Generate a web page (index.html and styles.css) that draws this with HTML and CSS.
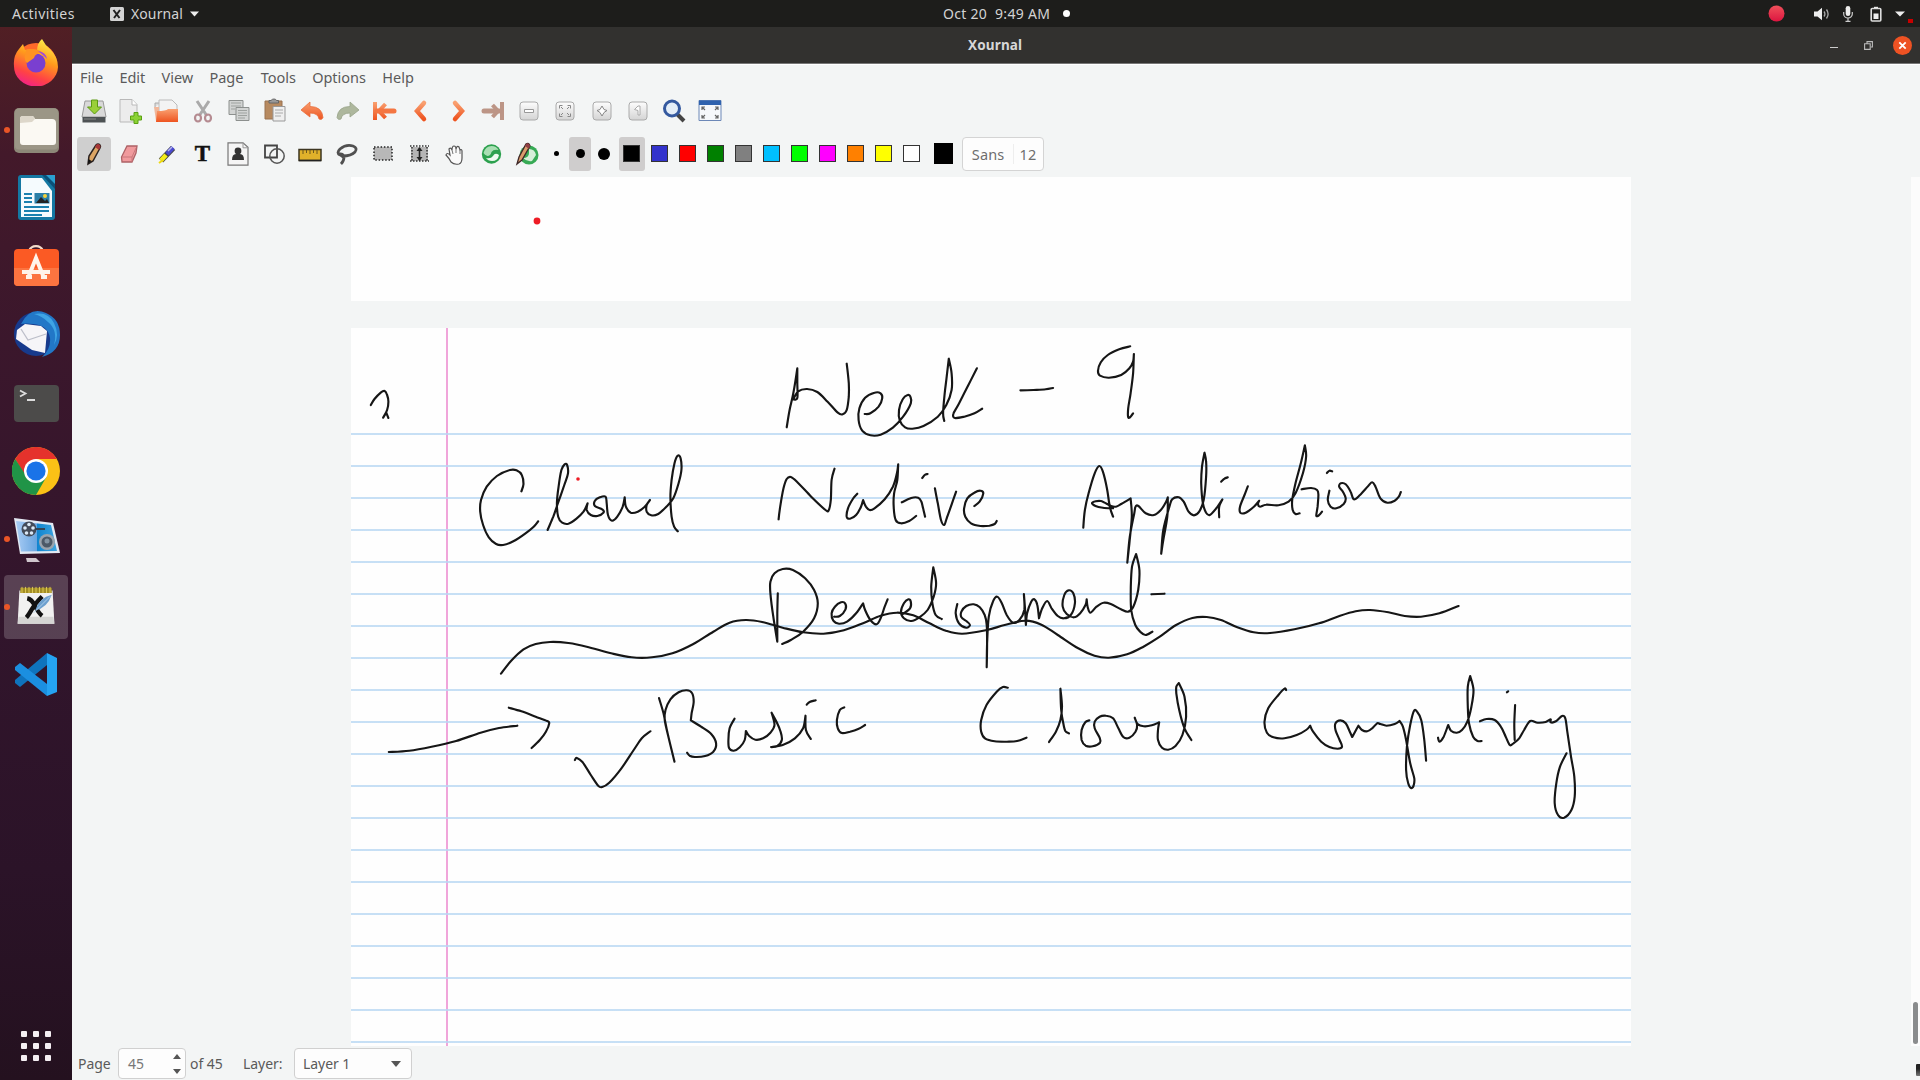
FILE: index.html
```html
<!DOCTYPE html>
<html lang="en">
<head>
<meta charset="utf-8">
<title>Xournal</title>
<link rel="stylesheet" href="styles.css">
</head>
<body>
<svg width="0" height="0" class="defs">
  <defs>
    <linearGradient id="or" x1="0" y1="0" x2="0" y2="1"><stop offset="0" stop-color="#f9a070"/><stop offset="1" stop-color="#ee5420"/></linearGradient>
    <linearGradient id="fx" x1=".7" y1="0" x2=".3" y2="1"><stop offset="0" stop-color="#fff04a"/><stop offset=".4" stop-color="#ff9a1c"/><stop offset=".75" stop-color="#ff4344"/><stop offset="1" stop-color="#f0208a"/></linearGradient>
    <linearGradient id="gr" x1="0" y1="0" x2="0" y2="1"><stop offset="0" stop-color="#fdfdfd"/><stop offset="1" stop-color="#d4d4d4"/></linearGradient>
    <linearGradient id="rk" x1="0" y1="0" x2="1" y2="0"><stop offset="0" stop-color="#a8ccf4"/><stop offset=".5" stop-color="#6aa5e0"/><stop offset=".52" stop-color="#1185cf"/><stop offset="1" stop-color="#3fa5e0"/></linearGradient>
    <linearGradient id="rec" x1="0" y1="0" x2="0" y2="1"><stop offset="0" stop-color="#f0505a"/><stop offset="1" stop-color="#dc1540"/></linearGradient>
  </defs>
</svg>

<header class="topbar">
  <span class="activities">Activities</span>
  <span class="appmenu">
    <svg width="14" height="14" viewBox="0 0 14 14"><rect width="14" height="14" rx="1.500" fill="#d4d4d4"/><path d="M3.500 3l6 8M10 3L4 11" stroke="#222" stroke-width="2"/></svg>
    <span>Xournal</span>
    <svg width="9" height="6" viewBox="0 0 9 6"><path d="M0 .5h9L4.500 5.500z" fill="#eee"/></svg>
  </span>
  <span class="clock">Oct 20&nbsp; 9:49 AM</span><i class="clockdot"></i>
  <span class="tray">
    <svg class="rec" width="17" height="17" viewBox="0 0 17 17"><circle cx="8.500" cy="8.500" r="8" fill="url(#rec)"/></svg>
    <svg class="vol" width="16" height="14" viewBox="0 0 16 14"><path d="M0 4.500h3.500L8 .8v12.400L3.500 9.500H0z" fill="#eee"/><path d="M10 4.500q1.800 2.500 0 5M12.500 2.500q3.200 4.500 0 9" fill="none" stroke="#aaa" stroke-width="1.300"/></svg>
    <svg class="mic" width="10" height="16" viewBox="0 0 10 16"><rect x="2.700" y="0" width="4.600" height="10" rx="2.300" fill="#eee"/><path d="M.7 6v2a4.300 4 0 0 0 8.600 0V6M5 12v3.500M2.500 15.400h5" fill="none" stroke="#ccc" stroke-width="1.200"/></svg>
    <svg class="bat" width="12" height="16" viewBox="0 0 12 16"><path d="M4 .8h4v2H4z" fill="#eee"/><rect x="1.200" y="2.500" width="9.600" height="12.500" rx="1" fill="none" stroke="#ddd" stroke-width="1.600"/><path d="M3.500 7.500h5V13h-5z" fill="#eee"/></svg>
    <svg width="10" height="6" viewBox="0 0 10 6"><path d="M0 .5h10L5 5.500z" fill="#eee"/></svg>
  </span>
  <i class="marker"></i>
</header>

<div class="desktop">
<nav class="dock">
  <div class="app"><svg width="48" height="48" viewBox="0 0 48 48"><circle cx="24" cy="26" r="21" fill="#ff6a2a"/><path d="M30 1q3 6 8 10 8 8 8 18a22 20 0 0 1-44-1q-1-10 5-17l4-5 2 6q7-2 12 1 0-8 5-12z" fill="url(#fx)"/><circle cx="24" cy="25" r="9.500" fill="#7a3fd0"/><path d="M14 12q10-3 17 3-8 0-9 5l-7 5q-4-3-1-13z" fill="#ff9322"/><path d="M26 13q8 1 9 8l-3-3" fill="#a24bd8"/></svg></div>
  <div class="app run"><svg width="48" height="48" viewBox="0 0 48 48"><rect x="2" y="2" width="45" height="45" rx="5" fill="#8d8878"/><rect x="3" y="2.500" width="43" height="41" rx="4" fill="#9b9686"/><path d="M8 13q0-3 3-3h9q2 0 3 3h17q4 0 4 4v19q0 3-3 3H11q-3 0-3-3z" fill="#fbf9f3"/><path d="M8 17v-4q0-3 3-3h9q2 0 3 3l-3 3z" fill="#ddd7ca"/></svg></div>
  <div class="app"><svg width="48" height="48" viewBox="0 0 48 48"><path d="M9 1h29l5 8v34q0 3-3 3H9q-3 0-3-3V4q0-3 3-3z" fill="#1478a3"/><path d="M9 4h21l10 13v26H9z" fill="#f5fbfe"/><path d="M30 1h13v14z" fill="#0b5078"/><path d="M34 1h9v9z" fill="#2a9fd0"/><path d="M12 20h8M12 24h8M12 28h8M12 33h25M12 37h25M12 41h18" stroke="#1a81b0" stroke-width="1.900"/><rect x="22.500" y="19" width="15" height="10.500" fill="#2a7fa8"/><path d="M24 29l5-6 4 4 2-2 2 4z" fill="#222"/><circle cx="33" cy="22" r="2" fill="#f4d03a"/></svg></div>
  <div class="app"><svg width="48" height="48" viewBox="0 0 48 48"><path d="M17 9a7.500 7.500 0 0 1 14 0" fill="none" stroke="#f3dccb" stroke-width="2.200"/><rect x="2" y="7" width="45" height="37" rx="4" fill="#fb5a24"/><path d="M2 26h45v14q0 4-4 4H6q-4 0-4-4z" fill="#fc7440"/><path d="M16 36l8-20 8 20M10 30h28" fill="none" stroke="#fff4ea" stroke-width="4"/><path d="M14 35h6M29 35h6" stroke="#fff4ea" stroke-width="4"/></svg></div>
  <div class="app"><svg width="48" height="48" viewBox="0 0 48 48"><circle cx="24" cy="24" r="22" fill="#173a8c"/><path d="M9 14Q18-4 34 3q14 6 14 22 0 17-18 22 9-8 8-19-2-13-17-14-7-1-12 0z" fill="#2277c7"/><path d="M22 4q14-3 20 9t0 22q4-15-6-23-6-6-14-8z" fill="#3fa4e4"/><path d="M5 20l8-6 16 2 6 5-2 22-13-3-16-11z" fill="#f6f5f8"/><path d="M9 19l7 11 18-6" fill="none" stroke="#bdbfca" stroke-width="1.300"/></svg></div>
  <div class="app"><svg width="48" height="48" viewBox="0 0 48 48"><rect x="2" y="6" width="45" height="37" rx="4" fill="#4c4b4a"/><path d="M8 11.500l5.500 3-5.500 3M15 21h8" fill="none" stroke="#dcdcdc" stroke-width="1.800"/></svg></div>
  <div class="app"><svg width="48" height="48" viewBox="0 0 48 48"><circle cx="24" cy="24" r="24" fill="#fbc116"/><path d="M3.200 12a24 24 0 0 1 41.600 0H24L14 30z" fill="#e5322c"/><path d="M3.200 12A24 24 0 0 0 24 48l10.400-18L24 34l-9-4z" fill="#209447"/><circle cx="24" cy="24" r="12" fill="#fff"/><circle cx="24" cy="24" r="9.600" fill="#1a73e8"/></svg></div>
  <div class="app run"><svg width="48" height="48" viewBox="0 0 48 48"><path d="M2 3l39 5 7 30-40 1z" fill="#e3e9f3"/><path d="M4 6l35 4 6 26-36 .5z" fill="url(#rk)"/><circle cx="17" cy="14" r="7.500" fill="#444b59"/><g fill="#dbe8f5"><circle cx="17" cy="9.500" r="1.800"/><circle cx="13" cy="13" r="1.800"/><circle cx="21" cy="13" r="1.800"/><circle cx="14.500" cy="18" r="1.800"/><circle cx="19.500" cy="18" r="1.800"/></g><path d="M23 14h10" stroke="#345" stroke-width="2"/><circle cx="35" cy="27" r="8" fill="#9aa4ae"/><circle cx="35" cy="27" r="5.500" fill="#4c5967"/><circle cx="35" cy="26" r="2.500" fill="#8394a3"/><path d="M14 43h10l4 4H15z" fill="#cfc5cc"/></svg></div>
  <div class="app run active"><svg width="48" height="48" viewBox="0 0 48 48"><path d="M5 5h38l2 38H3z" fill="#f1f1f0"/><path d="M3 43l1-8h40l1 8z" fill="#d5d5d3"/><path d="M6 2h36v6H6z" fill="#a28d25"/><path d="M8 1v7M12 1v7M16 1v7M20 1v7M24 1v7M28 1v7M32 1v7M36 1v7M40 1v7" stroke="#e3cf59"/><path d="M14 14q5 1 9 9t8 11M31 12q-8 8-12 15t-6 9" fill="none" stroke="#111" stroke-width="5"/><path d="M42 10q-14 3-19 18 14-3 19-18z" fill="#6da0ce"/><path d="M40 12L21 31" stroke="#b7d4ea"/></svg></div>
  <div class="app"><svg width="48" height="48" viewBox="0 0 48 48"><path d="M35 2l10 5v34l-10 4z" fill="#25a3f2"/><path d="M35 2v12L8 36l-5-4v-3z" fill="#0f73bd"/><path d="M3 16l5-4 27 21v12L3 19z" fill="#1b8fe0"/></svg></div>
  <div class="grid"><i></i><i></i><i></i><i></i><i></i><i></i><i></i><i></i><i></i></div>
</nav>

<main class="window">
  <div class="titlebar">
    <span class="title">Xournal</span>
    <span class="controls">
      <i class="min"></i>
      <svg width="9" height="9" viewBox="0 0 9 9"><path d="M3 2.500V.6h5.400V6H7M.6 2.800h5.600v5.600H.6z" fill="none" stroke="#bbb" stroke-width="1.100"/></svg>
      <svg width="19" height="19" viewBox="0 0 19 19"><circle cx="9.500" cy="9.500" r="9.500" fill="#ee5223"/><path d="M6.300 6.300l6.400 6.400M12.700 6.300l-6.400 6.400" stroke="#fff" stroke-width="1.800"/></svg>
    </span>
  </div>
  <div class="menubar"><span>File</span><span>Edit</span><span>View</span><span>Page</span><span>Tools</span><span>Options</span><span>Help</span></div>

  <div class="toolbar main-tools">
    <b><svg viewBox="0 0 24 24"><path d="M3 2h18l3 16H0z" fill="#d9d9d9" stroke="#999"/><path d="M.5 18h23v5.500H.5z" fill="#4d5254"/><path d="M2 20h12" stroke="#888"/><path d="M9.500 1h6v7h4l-7 7-7-7h4z" fill="#9ad038" stroke="#5c9a12"/></svg></b>
    <b><svg viewBox="0 0 24 24"><path d="M2 .5h12l5 5V23H2z" fill="#ececec" stroke="#b9b9b9"/><path d="M14 .5V6h5" fill="#fff" stroke="#b9b9b9"/><path d="M16 13.500h4V17h3.500v4H20v3.500h-4V21h-3.500v-4H16z" fill="#8bd234" stroke="#5aa113"/></svg></b>
    <b><svg viewBox="0 0 24 24"><path d="M0 8V4h6" fill="#ddd" stroke="#aaa"/><path d="M4 1h13l5 5v8H4z" fill="#f3f3f3" stroke="#bbb"/><path d="M-1 8h5v14H1z" fill="#f1b79a"/><path d="M2 12q9 0 11-2h10v13H1z" fill="url(#or)"/></svg></b>
    <b><svg viewBox="0 0 24 24"><path d="M6 2l10 15M18 2L8 17" stroke="#aaa" stroke-width="3"/><ellipse cx="7" cy="19" rx="3" ry="3.500" fill="none" stroke="#b58b91" stroke-width="2.200"/><ellipse cx="17" cy="19" rx="3" ry="3.500" fill="none" stroke="#b58b91" stroke-width="2.200"/></svg></b>
    <b><svg viewBox="0 0 24 24"><g fill="#d2d4d3" stroke="#8c908e"><path d="M2 1.500h14v14H2z"/><path d="M9 8.500h13v13H9z"/></g><path d="M4 4h10M4 7h10M4 10h4M11 11.500h9M11 14h9M11 16.500h9M11 19h7" stroke="#9ea29f"/></svg></b>
    <b><svg viewBox="0 0 24 24"><path d="M2 2h17v18H2z" fill="#b78a60" stroke="#9a7350"/><path d="M6 4V1.500h2Q9 0 11 0t2.500 1.500h2V4z" fill="#999" stroke="#666"/><path d="M10 7.500h12V22H10z" fill="#efefef" stroke="#999"/><path d="M12 11h8M12 14h8M12 17h6" stroke="#aaa"/></svg></b>
    <b><svg viewBox="0 0 24 24"><path d="M1 11l9-8v4.500q12 0 13 11-1 3-4 1.500-1-6-9-6v4z" fill="url(#or)" stroke="#e8703d" stroke-width=".8"/></svg></b>
    <b><svg viewBox="0 0 24 24"><path d="M23 11l-9-8v4.500q-12 0-13 11 1 3 4 1.500 1-6 9-6v4z" fill="#adb79d" stroke="#98a389" stroke-width=".8"/></svg></b>
    <b><svg viewBox="0 0 24 24"><path d="M3 3v18M13.500 5L7 12l6.500 7" fill="none" stroke="url(#or)" stroke-width="4"/><path d="M22 12H5" stroke="#f47642" stroke-width="5" stroke-linecap="round"/></svg></b>
    <b><svg viewBox="0 0 24 24"><path d="M16 4L9 12l7 8" fill="none" stroke="url(#or)" stroke-width="4.500" stroke-linecap="round"/></svg></b>
    <b><svg viewBox="0 0 24 24"><path d="M10 4l7 8-7 8" fill="none" stroke="url(#or)" stroke-width="4.500" stroke-linecap="round"/></svg></b>
    <b><svg viewBox="0 0 24 24"><path d="M21 3v18M11.500 6l5.500 6-5.500 6" fill="none" stroke="#bc9586" stroke-width="4"/><path d="M3 12h15" stroke="#bc9586" stroke-width="5" stroke-linecap="round"/></svg></b>
    <b><svg viewBox="0 0 24 24"><rect x="3" y="3" width="18" height="18" rx="3" fill="url(#gr)" stroke="#aaa"/><path d="M7.500 10.500h9v3h-9z" fill="#fff" stroke="#999"/></svg></b>
    <b><svg viewBox="0 0 24 24"><rect x="3" y="3" width="18" height="18" rx="3" fill="url(#gr)" stroke="#aaa"/><path d="M6.500 9.500v-3h3M14.500 6.500h3v3M17.500 14.500v3h-3M9.500 17.500h-3v-3M8 8l2 2M16 8l-2 2M8 16l2-2M16 16l-2-2" fill="none" stroke="#888"/></svg></b>
    <b><svg viewBox="0 0 24 24"><rect x="3" y="3" width="18" height="18" rx="3" fill="url(#gr)" stroke="#aaa"/><path d="M12 7l2 3.500 3 1-3 2L12 17l-2-3.500-3-2 3-1z" fill="#fff" stroke="#888"/></svg></b>
    <b><svg viewBox="0 0 24 24"><rect x="3" y="3" width="18" height="18" rx="3" fill="url(#gr)" stroke="#aaa"/><path d="M8.500 10.500L12 7h2v9h-2v-4.500z" fill="#fff" stroke="#aaa"/></svg></b>
    <b><svg viewBox="0 0 24 24"><path d="M15 15l7 7" stroke="#444" stroke-width="4"/><circle cx="10" cy="9.500" r="7.500" fill="#e4eef8" stroke="#34599f" stroke-width="3"/></svg></b>
    <b><svg viewBox="0 0 24 24"><path d="M1 1.500h22v20H1z" fill="#f6f8fb" stroke="#6c88b7"/><path d="M1 1.500h22V6H1z" fill="#2f62ae"/><path d="M4 11V8h3M17 8h3v3M20 16v3h-3M7 19H4v-3M4 8l3 3M20 8l-3 3M4 19l3-3M20 19l-3-3" fill="none" stroke="#666" stroke-width="1.200"/></svg></b>
  </div>

  <div class="toolbar pen-tools">
    <b class="on"><svg viewBox="0 0 24 24"><path d="M6 22l1-8L14 3q2-2 4 0 1 1 0 3l-7 13z" fill="#dca564" stroke="#2b2220" stroke-width="1.500"/><path d="M14 3q2-2 4 0 1 1 0 3l-1 2-4-3z" fill="#a83838"/><path d="M6 22l.5-5 3 2z" fill="#111"/></svg></b>
    <b><svg viewBox="0 0 24 24"><path d="M9 4h10l-1 7-4 9H4l-.5-5z" fill="#f09a9d" stroke="#ad6266" stroke-width="1.300"/><path d="M4 15h10l4-9M14 15v5" fill="none" stroke="#c9777b"/></svg></b>
    <b><svg viewBox="0 0 24 24"><path d="M7 18.500L19 6" stroke="#444" stroke-width="6"/><path d="M13 12l6-6.500" stroke="#4a4ad0" stroke-width="4.500"/><path d="M7 18.500l5-5.500" stroke="#f4ed18" stroke-width="4.500"/><path d="M5 21l4-3" stroke="#eed910" stroke-width="2"/><path d="M14 9l4-4" stroke="#b9b9ef" stroke-width="1.500"/></svg></b>
    <b class="text-tool">T</b>
    <b><svg viewBox="0 0 24 24"><path d="M2 .8h15l5 4.500v17.900H2z" fill="#f5f5f5" stroke="#777" stroke-width="1.200"/><path d="M17 .8v5h5" fill="none" stroke="#999"/><circle cx="12" cy="9" r="3.400" fill="#333"/><path d="M6 18q0-6 4-6h4q4 0 4 6z" fill="#333"/></svg></b>
    <b><svg viewBox="0 0 24 24"><path d="M2 3.500h12v12H2z" fill="none" stroke="#444" stroke-width="1.800"/><circle cx="14" cy="14" r="7.200" fill="none" stroke="#555" stroke-width="1.500"/></svg></b>
    <b><svg viewBox="0 0 24 24"><path d="M0 7.500h22v11H0z" fill="#e0b12a" stroke="#3d3622" stroke-width="1.500"/><path d="M4 8v4M7.500 8v3M11 8v4M14.500 8v3M18 8v4" stroke="#6d571a"/><path d="M0 18.500h22" stroke="#222" stroke-width="1.500"/></svg></b>
    <b><svg viewBox="0 0 24 24"><path d="M5 13q-4-2 0-6 6-5 13-3 5 2 2 6-4 4-12 4M4 12q4-1 5 3 0 4-3 7M4 12l4 3" fill="none" stroke="#505050" stroke-width="2.800"/></svg></b>
    <b><svg viewBox="0 0 24 24"><path d="M3 5h18v13H3z" fill="#b8b8b8" stroke="#222" stroke-width="1.500" stroke-dasharray="1.500 1.800"/></svg></b>
    <b><svg viewBox="0 0 24 24"><path d="M4 5h17v14H4z" fill="#b5b5b5"/><path d="M3 4h19M3 19h19M5 5v14M20 5v14" stroke="#333" stroke-width="1.500" stroke-dasharray="1.500 1.500"/><path d="M12.500 6v12" stroke="#222" stroke-width="1.600"/><path d="M9.500 9l3-4 3 4zM9.500 15l3 4 3-4z" fill="#222"/></svg></b>
    <b><svg viewBox="0 0 24 24"><path d="M8 20q-2-4-5-7 1-3 4 0l-1-6q2-2 3 1 0-4 2-4t2 3q1-4 3-2l1 3q2-1 2 1v7q0 5-3 6-5 1-8-2z" fill="#fafafa" stroke="#555" stroke-width="1.200"/><path d="M9 8l1 4M13 7v4M17 8v4" stroke="#777"/></svg></b>
    <b><svg viewBox="0 0 24 24"><circle cx="12.500" cy="12" r="9.700" fill="#2ca14e"/><path d="M4.500 11q2-7 8-7 5 0 7 4-5-1-7 2-1 4-4 4-3-1-4-3z" fill="#a9dfb3"/><path d="M20 13q-1 6-7 6-4 0-6-3 5 1 7-2 2-4 6-1z" fill="#eefaf0"/></svg></b>
    <b><svg viewBox="0 0 24 24"><circle cx="14" cy="13" r="9.500" fill="#37aa55"/><path d="M14 7q6 0 7 6l-4 6q-5 1-9-3 6 0 6-5z" fill="#d5efd9"/><path d="M2 22l2-7L11 2q3-2 4 2L7 18z" fill="#d99c6c" stroke="#3d2626" stroke-width="1.300"/><path d="M11 2q3-2 4 2l-1 3-4-3z" fill="#914044"/></svg></b>
    <span class="thick"><i class="t1"></i></span><span class="thick on"><i class="t2"></i></span><span class="thick"><i class="t3"></i></span>
    <span class="swatch on"><i class="black"></i></span><span class="swatch"><i class="blue"></i></span><span class="swatch"><i class="red"></i></span><span class="swatch"><i class="green"></i></span><span class="swatch"><i class="gray"></i></span><span class="swatch"><i class="sky"></i></span><span class="swatch"><i class="lime"></i></span><span class="swatch"><i class="magenta"></i></span><span class="swatch"><i class="orange"></i></span><span class="swatch"><i class="yellow"></i></span><span class="swatch"><i class="white"></i></span>
    <i class="current"></i>
    <span class="font"><span>Sans</span><span class="size">12</span></span>
  </div>

  <section class="canvas">
    <div class="sheet previous"></div>
    <div class="sheet ruled"><div class="rules"></div></div>
    <svg id="ink" class="ink" viewBox="72 177 1848 869" role="img" aria-label="Week - 9, Cloud Native Application Development, Basic Cloud Computing"></svg>
    <div class="track"><i class="scroll"></i></div>
  </section>

  <footer class="status">
    <span class="lbl-page">Page</span>
    <span class="spin"><span>45</span><svg width="8" height="20" viewBox="0 0 8 20"><path d="M0 5l4-5 4 5zM0 15h8l-4 5z" fill="#555"/></svg></span>
    <span class="of">of 45</span>
    <span class="lbl-layer">Layer:</span>
    <span class="combo"><span>Layer 1</span><svg width="10" height="6" viewBox="0 0 10 6"><path d="M0 0h10L5 6z" fill="#555"/></svg></span>
    <i class="grip"></i>
  </footer>
</main>
</div>
<script src="ink.js"></script>
</body>
</html>
```
FILE: styles.css
```css
* { box-sizing: border-box; }
body { margin: 0; width: 1920px; height: 1080px; overflow: hidden; display: flex; flex-direction: column; font: 14px "Noto Sans", "Open Sans", sans-serif; color: #5a5a5a; background: #f3f5f5; }
svg { display: block; flex: none; }
.defs { position: absolute; }

.topbar { height: 27px; flex: none; background: #1d1d1b; color: #d3d3d3; display: flex; align-items: center; position: relative; padding-left: 12px; line-height: 26px; }
.activities { width: 98px; letter-spacing: .45px; }
.appmenu { display: flex; align-items: center; gap: 7px; width: 833px; letter-spacing: .1px; }
.clock { width: 119px; white-space: nowrap; letter-spacing: .3px; }
.clockdot { width: 7px; height: 7px; border-radius: 50%; background: #fff; margin-left: 1px; }
.tray { margin-left: auto; display: flex; align-items: center; margin-right: 15px; }
.rec { margin-right: 29px; }
.vol { margin-right: 13px; }
.mic { margin-right: 17px; }
.bat { margin-right: 13px; }
.marker { position: absolute; right: 7px; top: 19px; width: 5px; height: 4px; background: #c80000; }

.desktop { flex: 1; display: flex; min-height: 0; }
.dock { width: 72px; flex: none; background: linear-gradient(#511f24, #43192a 12%, #3b172c 30%, #32152c 55%, #2b1328 80%, #24111f); padding-top: 1px; display: flex; flex-direction: column; }
.app { height: 68.100px; display: flex; align-items: center; justify-content: center; position: relative; }
.run::before { content: ""; position: absolute; left: 4px; top: 31px; width: 6px; height: 6px; border-radius: 50%; background: #ea5527; z-index: 1; }
.app.active::after { content: ""; position: absolute; inset: 2px 4px; border-radius: 4px; background: #ffffff30; }
.active svg { position: relative; z-index: 1; width: 42px; }
.grid { margin: auto auto 19px; display: grid; grid-template-columns: repeat(3, 6px); gap: 6px; }
.grid i { height: 6px; background: #f4eef2; border-radius: 1px; }

.window { flex: 1; display: flex; flex-direction: column; min-width: 0; }
.titlebar { height: 37px; background: #32312f; border-bottom: 1px solid #777; display: flex; align-items: center; padding: 0 8px 0 896px; flex: none; }
.title { color: #d7d7d7; font-weight: 700; font-size: 13.500px; letter-spacing: .15px; }
.controls { margin-left: auto; display: flex; align-items: center; }
.min { width: 8px; height: 1px; background: #ccc; margin: 5px 26px 0 0; }
.controls svg { margin-right: 20px; }
.controls svg:last-child { margin-right: 0; }
.menubar { height: 26px; flex: none; display: flex; gap: 16.200px; padding: 0 8px; line-height: 24px; font-size: 14.500px; border-top: 1px solid #fff; }
.menubar span:nth-child(5) { margin-left: 1px; }

.toolbar { display: flex; align-items: center; padding-left: 4px; flex: none; }
.main-tools { height: 41px; }
.pen-tools { height: 46px; padding-bottom: 1px; }
.toolbar b { width: 36.250px; height: 34px; display: flex; align-items: center; justify-content: center; }
.pen-tools b { width: 36.100px; }
.toolbar b svg { width: 24px; height: 24px; overflow: visible; }
b.on { background: #cfcfcf; background-clip: content-box; padding: 0 1px; border-radius: 4px; }
.toolbar .text-tool { font: 700 23px/34px "Liberation Serif", serif; color: #111; -webkit-text-stroke: .5px #111; }
.thick { width: 22px; height: 34px; margin-right: 2px; border-radius: 3px; display: flex; align-items: center; justify-content: center; }
.thick.on, .swatch.on { background: #cfcdcd; }
.thick i { border-radius: 50%; background: #000; }
.t1 { width: 5px; height: 5px; }
.t2 { width: 9px; height: 9px; }
.t3 { width: 12px; height: 12px; }
.swatch { width: 26px; height: 34px; margin-right: 2px; border-radius: 3px; display: flex; align-items: center; justify-content: center; }
.thick + .swatch { margin-left: 1.500px; }
.swatch i { width: 17px; height: 17px; border: 1.500px solid #333; }
.black { background: #000; }
.blue { background: #3333cc; }
.red { background: #f00; }
.green { background: #008000; }
.gray { background: #808080; }
.sky { background: #00c0ff; }
.lime { background: #0f0; }
.magenta { background: #f0f; }
.orange { background: #ff8000; }
.yellow { background: #ff0; }
.white { background: #fff; }
.current { width: 19px; height: 21px; background: #000; margin: 0 9px 0 7px; }
.font { width: 82px; height: 34px; border: 1px solid #d4d4d4; border-radius: 4px; background: #fdfdfd; display: flex; align-items: center; padding-left: 9px; font-size: 14.500px; color: #6e6e6e; letter-spacing: .2px; }
.size { margin-left: 8px; border-left: 1px solid #eee; padding-left: 6px; }

.canvas { height: 869px; flex: none; position: relative; padding-left: 279px; overflow: hidden; }
.sheet { width: 1280px; background: #fefefe; }
.previous { height: 124px; margin-bottom: 27px; }
.ruled { height: 718px; padding-top: 105px; background: linear-gradient(90deg, transparent 95px, #f0a5da 95px, #f0a5da 97px, transparent 97px), #fefefe; }
.rules { height: 613px; background: repeating-linear-gradient(#b9d8f3cc 0, #b9d8f3cc 2px, transparent 2px, transparent 32px); }
.ink { position: absolute; left: 0; top: 0; width: 1848px; height: 869px; }
.ink path { fill: none; stroke: #161616; stroke-width: 2.150; stroke-linecap: round; stroke-linejoin: round; }
.track { position: absolute; right: 0; top: 0; width: 9px; height: 869px; background: #fcfcfc; padding: 825px 0 0 2px; }
.scroll { display: block; width: 5px; height: 42px; border-radius: 3px; background: #8a8c8d; }

.status { height: 34px; flex: none; display: flex; align-items: center; padding: 1px 0 0 6px; letter-spacing: -.05px; }
.lbl-page { width: 40px; }
.spin { width: 68px; height: 31px; border: 1px solid #d0d0d0; border-radius: 4px; background: #fdfdfd; display: flex; align-items: center; justify-content: space-between; padding: 0 4px 0 9px; color: #777; }
.of { width: 57px; padding-left: 4px; white-space: nowrap; }
.lbl-layer { width: 51px; }
.combo { width: 118px; height: 31px; border: 1px solid #d0d0d0; border-radius: 4px; background: #fdfdfd; display: flex; align-items: center; justify-content: space-between; padding: 0 10px 0 8px; }
.grip { margin-left: auto; width: 4px; height: 12px; margin-top: 16px; margin-bottom: 4px; background: linear-gradient(#222 40%, #777); border-radius: 1px 0 0 1px; }
```
FILE: ink.js
```js
// Pen strokes, one per line. Each block is recorded on its own grid: origin x, origin y, then points.
const SX = 2.45, SY = 3;
const blocks = [
  [350, 330, `
51,225 60,207 76,187 85,183 91,195 94,215 91,240 81,263 81,263 89,248 89,248 94,264
1070,292 1077,240 1086,190 1096,115 1096,115 1096,160 1096,204 1086,208 1086,208 1098,184 1120,177 1145,186 1170,215 1195,248 1207,253 1217,240 1222,200 1222,160 1217,101
1261,252 1275,250 1295,230 1304,205 1300,190 1285,188 1262,203 1248,235 1246,270 1255,302 1275,316 1300,314 1330,293 1355,260 1374,220 1373,200 1366,195 1354,208 1345,240 1347,272 1360,292 1378,296 1405,288 1440,260 1461,225 1474,180 1474,130 1467,86 1467,86 1462,140 1457,190 1453,250 1456,273
1536,115 1515,165 1490,225 1478,252 1482,264 1505,260 1530,250 1549,236
420,484 425,462 421,435 408,421 392,420 360,438 335,470 321,510 319,545 326,585 340,622 358,642 375,645 400,634 430,610 450,590 461,574
484,600 498,560 508,525 525,465 534,430 532,405 526,403 518,420 511,470 507,520 510,560 520,578 535,581 555,566 572,545 582,520 582,520 580,540 590,555 606,558 621,548 618,538 600,528 600,512 612,502 626,500 629,520 632,555 642,572 655,560 668,530 673,502 673,502 676,530 688,548 705,545 722,530 735,510 735,510 727,525 727,545 738,556 755,552 775,530 792,505 805,460 812,420 810,385 803,377 795,400 788,450 785,500 788,560 794,590 803,604
1050,568 1054,530 1062,475 1070,447 1080,441 1095,455 1130,500 1165,540 1173,540 1178,510 1180,450 1187,416
1243,491 1233,505 1220,535 1217,560 1225,566 1240,555 1252,530 1257,510 1257,510 1264,530 1273,540 1285,535 1310,508 1330,470 1340,430 1343,403 1343,403 1341,450 1333,490 1332,530 1337,570 1350,580 1370,573 1387,558
1352,517 1375,504 1392,503 1400,515 1404,535 1409,560
1402,444 1408,435 1415,432
1433,475 1440,520 1448,570 1456,585 1462,565 1475,520 1485,485
1048,790 1047,850 1047,935 1047,935 1037,860 1030,790 1030,755 1040,730 1060,717 1085,720 1115,745 1137,780 1146,820 1137,865 1110,905 1080,930 1059,942
1186,860 1200,858 1214,838 1213,820 1203,817 1188,830 1180,850 1184,872 1198,881 1218,875 1240,850 1257,820 1257,820 1262,840 1275,870 1290,883 1300,865 1310,830 1317,808
1354,852 1372,835 1374,815 1368,808 1357,820 1350,845 1357,865 1375,873 1395,862 1415,840 1430,800 1436,760 1429,712 1429,712 1424,770 1427,820 1435,855 1450,867
1488,822 1484,850 1492,880 1510,893 1519,885 1512,875 1498,862 1498,845 1510,828 1528,823 1543,832 1555,855 1560,885 1561,940 1560,1012 1560,1012 1561,940 1565,860 1575,815 1586,800 1597,820 1609,855 1624,878 1640,870 1652,840 1651,792 1651,792 1654,840 1656,885 1656,885 1659,850 1669,815 1677,808 1684,825 1688,865 1688,865 1696,835 1708,813 1719,835 1734,858 1749,865 1766,855 1776,820 1772,790 1761,781 1750,795 1746,830 1756,852 1774,862 1789,850 1802,825 1805,808 1805,808 1807,830 1814,848 1829,830 1846,818 1864,822 1889,838 1906,845 1919,830 1931,780 1934,720 1926,672 1926,672 1916,710 1913,770 1914,840 1924,885 1936,905 1949,915 1966,905
370,1031 395,992 425,958 455,942 490,936 535,939 580,950 640,970 690,982 740,982 790,970 840,943 890,905 930,878 970,870 1010,876 1060,893 1110,907 1160,911 1210,901 1260,878 1300,857 1340,848 1380,856 1420,880 1460,902 1500,911 1560,900 1604,885 1654,872 1694,884 1734,915 1784,955 1824,977 1859,983 1904,973 1944,950 1984,920 2024,885 2064,864 2099,861 2134,870 2174,892 2214,907 2254,909 2314,898 2374,880 2424,858 2464,844 2499,840 2544,847 2584,858 2624,860 2669,850 2716,828`],
  [960, 330, `
35,528 48,515 57,490 50,482 35,488 18,505 10,535 13,560 27,580 50,588 72,587 85,582 90,573
148,181 180,180 210,178 228,174
417,49 390,58 362,75 345,97 338,122 343,137 365,143 395,135 415,115 424,95 426,72 426,72 424,130 418,190 412,235 412,262 418,260 424,250
302,593 306,540 315,490 330,430 341,408 350,425 360,475 367,530 375,560
375,535 350,533 332,528 324,518 345,513 370,528 382,530 395,522 418,505 418,505 421,560 415,640 410,698 410,698 416,620 427,550 430,530 437,528 455,550 475,555 492,540 505,515 509,502 509,502 508,560 498,630 493,671 493,671 498,600 513,530 520,508 536,502 548,515 560,545 573,556 586,545 597,510 603,440 603,395 599,368 599,368 593,410 591,460 595,520 603,548 612,555 628,535 643,508 643,508 635,530 635,562
640,455 648,446 656,442
705,469 697,495 686,530 687,548 700,548 720,530 733,512 733,512 730,522 735,530 750,524 780,526 805,515 822,490 840,430 848,380 845,346 845,346 835,400 822,460 814,510 815,540 822,552 832,550
837,478 860,474 875,480 878,495 876,530 873,557 880,555 887,545
905,482 901,510 908,530 922,535 940,522 945,505 938,485 929,470 933,460 945,463 957,485 965,508 980,495 1000,468 1010,457 1018,470 1030,505 1047,518 1065,512 1075,500 1080,486
899,429 905,422 912,424
469,793 501,791`],
  [350, 660, `
95,276 145,272 200,260 260,243 320,218 365,204 410,197
389,143 420,154 455,170 483,183 488,190 480,215 465,240 445,264
551,300 556,294 570,307 590,345 608,377 618,381 635,368 665,325 695,270 715,235 736,214
757,114 768,160 778,220 795,305 795,305 780,230 771,180 773,150 785,118 805,97 825,91 838,99 842,125 837,160 835,181 835,181 860,200 885,222 897,250 890,275 870,288 845,291 832,287 826,278
942,176 930,205 927,240 929,265 940,272 955,262 967,240 970,213 970,213 978,228 993,239 1012,235 1030,218 1040,195 1033,158 1033,158 1045,185 1055,215 1058,240 1047,258 1032,261 1060,255 1090,235 1110,205 1116,167 1116,167 1117,210 1129,237
1119,134 1126,126 1141,121
1211,142 1200,150 1193,180 1195,205 1205,219 1225,215 1245,207 1262,195`],
  [960, 660, `
117,83 105,81 90,95 65,135 52,180 52,215 62,236 85,244 115,245 140,243 163,233
218,246 235,215 246,180 250,140 246,86 246,86 248,150 253,190 258,213 267,220
317,181 307,187 298,210 298,240 308,257 325,259 343,248 342,233 330,205 330,185 342,170 358,167 375,175 388,205 400,231 415,233 430,215 434,195 428,173 428,173 435,192 450,199 470,196 488,187 488,187 485,210 485,240 495,263 510,269 528,258 545,225 554,170 550,110 536,69 536,69 530,80 530,100 537,150 550,205 567,240
799,90 795,86 780,105 755,145 746,185 752,218 768,232 795,235 825,225 848,210 858,197 858,197 865,215 885,245 905,261 925,266 936,260 930,240 920,210 920,190 932,181 945,190 955,215 961,231 961,231 968,215 976,197 976,197 985,210 998,214 1010,205 1022,190 1030,192 1045,197 1065,192 1077,183 1077,183 1085,200 1093,240 1103,310 1113,355 1111,378 1105,384 1098,370 1093,330 1095,260 1103,195 1112,153 1120,155 1130,180 1137,235 1142,302
1171,233 1175,245 1185,230 1196,195 1196,195 1203,212 1217,218 1230,210 1243,185 1253,140 1258,90 1250,48 1250,48 1244,80 1244,140 1247,190 1257,230 1268,243 1278,243
1274,184 1290,177 1310,180 1325,200 1337,230 1347,255 1356,250 1370,235 1382,210 1397,183 1415,188 1435,186 1447,178 1447,187 1460,184 1475,168 1483,175 1488,215 1497,290 1505,350 1506,410 1498,450 1480,473 1465,465 1457,430 1461,370 1470,320 1486,280
1360,135 1358,190 1359,240
1340,97 1343,94`]
];

const svg = document.getElementById("ink");
const NS = "http://www.w3.org/2000/svg";
const f = n => n.toFixed(1);

// Smooth curve through every point; a repeated point makes a sharp turn.
function curve(p) {
  let d = `M${f(p[0][0])} ${f(p[0][1])}`;
  for (let i = 0; i < p.length - 1; i++) {
    const a = p[i - 1] || p[i], b = p[i], c = p[i + 1], e = p[i + 2] || c;
    if (b[0] === c[0] && b[1] === c[1]) continue;
    d += `C${f(b[0] + (c[0] - a[0]) / 6)} ${f(b[1] + (c[1] - a[1]) / 6)} ${f(c[0] - (e[0] - b[0]) / 6)} ${f(c[1] - (e[1] - b[1]) / 6)} ${f(c[0])} ${f(c[1])}`;
  }
  return d;
}

for (const [ox, oy, text] of blocks) {
  for (const line of text.trim().split("\n")) {
    const pts = line.trim().split(" ").map(s => {
      const [x, y] = s.split(",").map(Number);
      return [ox + x / SX, oy + y / SY];
    });
    const path = document.createElementNS(NS, "path");
    path.setAttribute("d", curve(pts));
    svg.appendChild(path);
  }
}

for (const [x, y, r] of [[537, 221, 3.4], [578, 479, 1.8]]) {
  const dot = document.createElementNS(NS, "circle");
  dot.setAttribute("cx", x);
  dot.setAttribute("cy", y);
  dot.setAttribute("r", r);
  dot.setAttribute("fill", "#ee1c25");
  svg.appendChild(dot);
}
```
